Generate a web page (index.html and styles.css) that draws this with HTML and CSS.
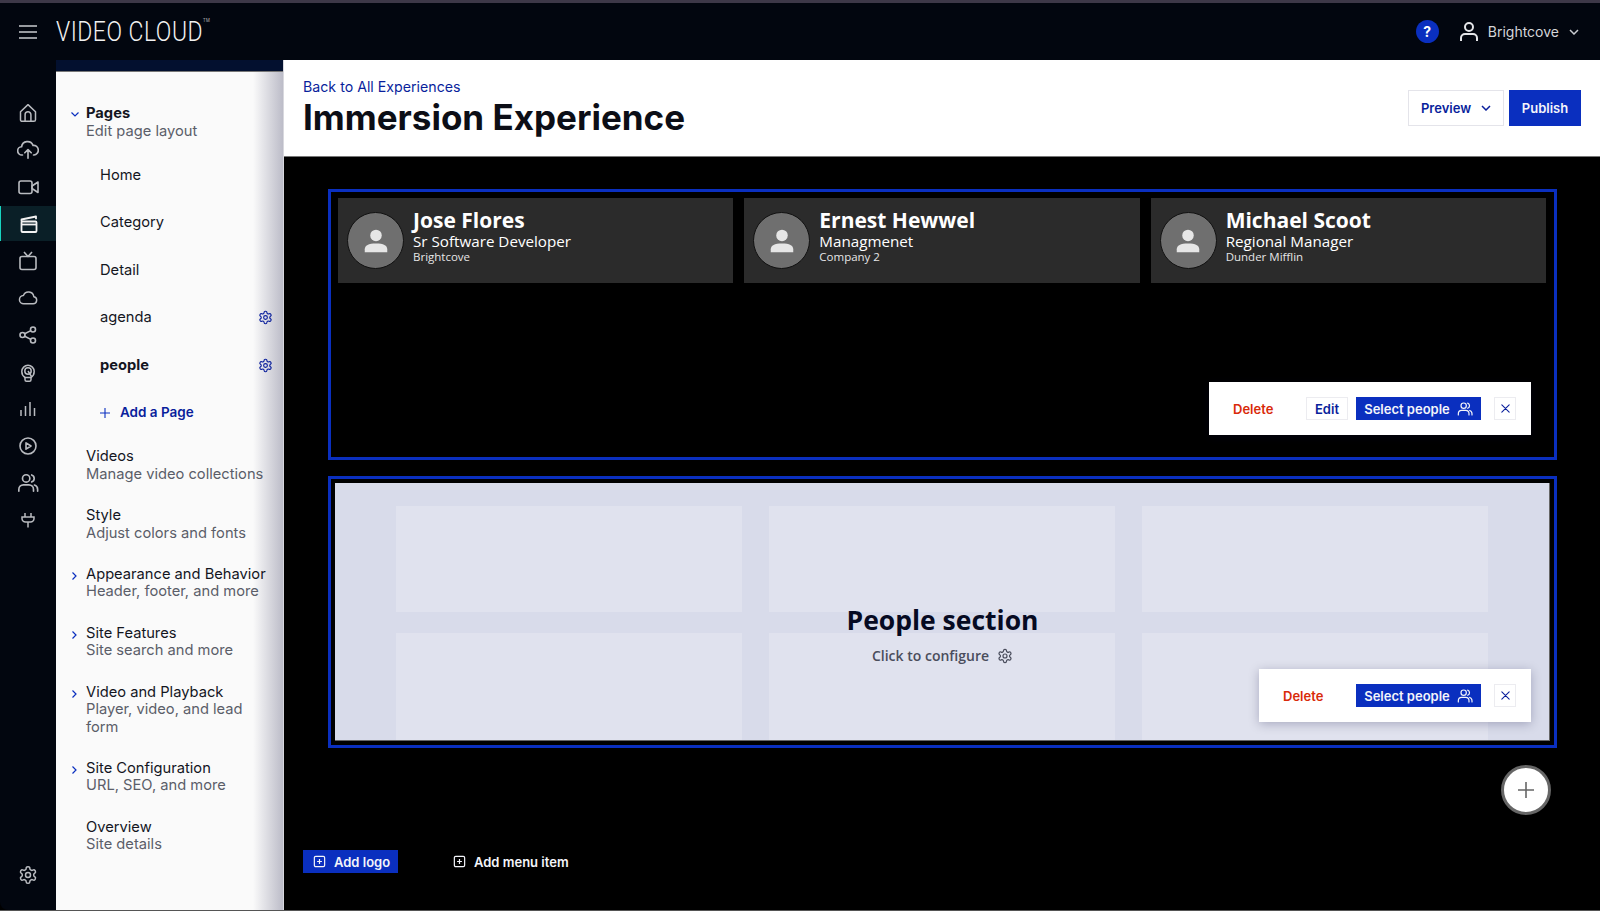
FILE: index.html
```html
<!DOCTYPE html>
<html lang="en">
<head>
  <meta charset="UTF-8">
  <meta name="viewport" content="width=device-width, initial-scale=1.0">
  <title>Immersion Experience</title>
  <link rel="stylesheet" href="styles.css">
</head>
<body>
  <svg class="sprites" xmlns="http://www.w3.org/2000/svg">
    <symbol id="gear" viewBox="0 0 24 24" fill="none" stroke="currentColor" stroke-width="1.8" stroke-linejoin="round">
      <path d="M12.22 2h-.44a2 2 0 0 0-2 2v.18a2 2 0 0 1-1 1.73l-.43.25a2 2 0 0 1-2 0l-.15-.08a2 2 0 0 0-2.73.73l-.22.38a2 2 0 0 0 .73 2.73l.15.1a2 2 0 0 1 1 1.72v.51a2 2 0 0 1-1 1.74l-.15.09a2 2 0 0 0-.73 2.73l.22.38a2 2 0 0 0 2.73.73l.15-.08a2 2 0 0 1 2 0l.43.25a2 2 0 0 1 1 1.73V20a2 2 0 0 0 2 2h.44a2 2 0 0 0 2-2v-.18a2 2 0 0 1 1-1.73l.43-.25a2 2 0 0 1 2 0l.15.08a2 2 0 0 0 2.73-.73l.22-.39a2 2 0 0 0-.73-2.73l-.15-.08a2 2 0 0 1-1-1.74v-.5a2 2 0 0 1 1-1.74l.15-.09a2 2 0 0 0 .73-2.73l-.22-.38a2 2 0 0 0-2.73-.73l-.15.08a2 2 0 0 1-2 0l-.43-.25a2 2 0 0 1-1-1.73V4a2 2 0 0 0-2-2z"/>
      <circle cx="12" cy="12" r="3"/>
    </symbol>
    <symbol id="users" viewBox="0 0 24 24" fill="none" stroke="currentColor" stroke-width="1.8" stroke-linecap="round">
      <circle cx="10" cy="7" r="4"/>
      <path d="M2 21v-2a5 5 0 0 1 5-5h6a5 5 0 0 1 5 5v2"/>
      <path d="M16 3.2a4 4 0 0 1 0 7.6"/>
      <path d="M19 14.2a5 5 0 0 1 3.5 4.8v2"/>
    </symbol>
    <symbol id="close" viewBox="0 0 24 24" fill="none" stroke="currentColor" stroke-width="2.4" stroke-linecap="round">
      <path d="M4 4l16 16M20 4L4 20"/>
    </symbol>
    <symbol id="person" viewBox="0 0 24 24" fill="currentColor">
      <circle cx="12" cy="7.5" r="4.6"/>
      <path d="M3 21v-2.5c0-3 3-4.6 9-4.6s9 1.600 9 4.600V21z"/>
    </symbol>
    <symbol id="add-box" viewBox="0 0 24 24" fill="none" stroke="currentColor" stroke-width="2.2">
      <rect x="2.500" y="2.500" width="19" height="19" rx="2.500"/>
      <path d="M12 7.500v9M7.500 12h9"/>
    </symbol>
  </svg>

  <div class="top-strip"></div>
  <header class="topbar">
    <svg class="menu-icon" width="18" height="14" viewBox="0 0 18 14" fill="none" stroke="#c9cbd0" stroke-width="1.600"><path d="M0 1h18M0 7h18M0 13h18"/></svg>
    <div class="logo">VIDEO CLOUD<sup>TM</sup></div>
    <div class="top-right">
      <span class="help">?</span>
      <svg class="user-icon" width="20" height="22" viewBox="0 0 20 22" fill="none" stroke="#e4e5e8" stroke-width="2"><circle cx="10" cy="6" r="4"/><path d="M2 20v-3a4 4 0 0 1 4-4h8a4 4 0 0 1 4 4v3"/></svg>
      <span class="account">Brightcove</span>
      <svg width="10" height="6" viewBox="0 0 10 6" fill="none" stroke="#c9cbd0" stroke-width="1.500"><path d="M1 1l4 4 4-4"/></svg>
    </div>
  </header>

  <div class="layout">
    <nav class="rail">
      <a class="rail-item"><svg width="20" height="20" viewBox="0 0 24 24" fill="none" stroke="currentColor" stroke-width="1.800" stroke-linejoin="round"><path d="M3 10.500L12 2l9 8.500V20a2 2 0 0 1-2 2H5a2 2 0 0 1-2-2z"/><path d="M8.500 22v-8a3.500 3.500 0 0 1 7 0v8"/></svg></a>
      <a class="rail-item"><svg width="22" height="22" viewBox="0 0 24 24" fill="none" stroke="currentColor" stroke-width="1.800" stroke-linecap="round" stroke-linejoin="round"><path d="M6 17.500H5.500a4.500 4.500 0 0 1-.5-9A6.500 6.500 0 0 1 17.500 7a5.200 5.200 0 0 1 1 10.400H18"/><path d="M12 21v-9M8.500 15l3.500-3.500 3.500 3.500"/></svg></a>
      <a class="rail-item"><svg width="21" height="16" viewBox="0 0 21 16" fill="none" stroke="currentColor" stroke-width="1.600" stroke-linejoin="round"><rect x="1" y="2" width="13" height="12.500" rx="2"/><path d="M14 7l6-4v10.500l-6-4z"/></svg></a>
      <a class="rail-item active"><svg width="18" height="18" viewBox="0 0 18 18" fill="none" stroke="currentColor" stroke-width="1.800"><rect x="1.500" y="6.500" width="15" height="10.500" rx="1"/><path d="M1.500 9.500h15"/><path d="M1.500 6.500V4.500L16 1.500v2.800" stroke-linejoin="round"/></svg></a>
      <a class="rail-item"><svg width="18" height="20" viewBox="0 0 18 20" fill="none" stroke="currentColor" stroke-width="1.600" stroke-linejoin="round"><rect x="1" y="5.500" width="16" height="13" rx="2"/><path d="M5 1l4 4.500L13 1"/></svg></a>
      <a class="rail-item"><svg width="20" height="20" viewBox="0 0 24 24" fill="none" stroke="currentColor" stroke-width="1.800" stroke-linejoin="round"><path d="M18 19H7a5 5 0 0 1-.5-10A6.500 6.500 0 0 1 19 10.500 4.300 4.300 0 0 1 18 19z"/></svg></a>
      <a class="rail-item"><svg width="18" height="18" viewBox="0 0 18 18" fill="none" stroke="currentColor" stroke-width="1.600"><circle cx="3.500" cy="9" r="2.500"/><circle cx="14" cy="3.500" r="2.500"/><circle cx="14" cy="14.500" r="2.500"/><path d="M5.700 7.800l6.100-3.200M5.700 10.200l6.100 3.200"/></svg></a>
      <a class="rail-item"><svg width="14" height="20" viewBox="0 0 14 20" fill="none" stroke="currentColor" stroke-width="1.500"><path d="M4 15.500C2 14.200.8 12 .8 9.500a6.200 6.200 0 0 1 12.400 0c0 2.500-1.200 4.700-3.200 6"/><circle cx="7" cy="9" r="3.200"/><path d="M7 9l3.500 5.500M4 15.500h6v2.200a1.500 1.500 0 0 1-1.500 1.500h-3A1.500 1.500 0 0 1 4 17.700z"/></svg></a>
      <a class="rail-item"><svg width="16" height="16" viewBox="0 0 16 16" fill="none" stroke="currentColor" stroke-width="1.500"><path d="M1 9v6M5.500 5v10M10 1v14M14.500 7v8"/></svg></a>
      <a class="rail-item"><svg width="18" height="18" viewBox="0 0 18 18" fill="none" stroke="currentColor" stroke-width="1.600" stroke-linejoin="round"><circle cx="9" cy="9" r="8"/><path d="M7 5.800L12 9l-5 3.200z"/></svg></a>
      <a class="rail-item"><svg width="22" height="22"><use href="#users"/></svg></a>
      <a class="rail-item"><svg width="14" height="16" viewBox="0 0 14 16" fill="none" stroke="currentColor" stroke-width="1.500"><path d="M1 5h12v1.500A3.500 3.500 0 0 1 9.500 10h-5A3.500 3.500 0 0 1 1 6.500zM4 1v4M10 1v4M7 10v5.500"/></svg></a>
      <a class="rail-item rail-bottom"><svg width="20" height="20"><use href="#gear"/></svg></a>
    </nav>

    <aside class="side-panel">
      <div class="side-strip"></div>
      <div class="side-nav">
        <div class="nav-group pages">
          <svg class="caret" width="8" height="5" viewBox="0 0 8 5" fill="none" stroke="#0a2fbf" stroke-width="1.200"><path d="M.5.500L4 4 7.500.500"/></svg>
          <div class="nav-title bold">Pages</div>
          <div class="nav-sub">Edit page layout</div>
        </div>
        <ul class="page-list">
          <li>Home</li>
          <li>Category</li>
          <li>Detail</li>
          <li>agenda <svg class="page-gear" width="15" height="15"><use href="#gear"/></svg></li>
          <li class="current">people <svg class="page-gear" width="15" height="15"><use href="#gear"/></svg></li>
          <li class="add-page"><svg width="10" height="10" viewBox="0 0 10 10" fill="none" stroke="#0a2fbf" stroke-width="1.100"><path d="M5 0v10M0 5h10"/></svg> Add a Page</li>
        </ul>
        <div class="nav-group">
          <div class="nav-title">Videos</div>
          <div class="nav-sub">Manage video collections</div>
        </div>
        <div class="nav-group">
          <div class="nav-title">Style</div>
          <div class="nav-sub">Adjust colors and fonts</div>
        </div>
        <div class="nav-group">
          <svg class="caret right" width="5" height="8" viewBox="0 0 5 8" fill="none" stroke="#0a2fbf" stroke-width="1.200"><path d="M.5.500L4 4 .5 7.500"/></svg>
          <div class="nav-title">Appearance and Behavior</div>
          <div class="nav-sub">Header, footer, and more</div>
        </div>
        <div class="nav-group">
          <svg class="caret right" width="5" height="8" viewBox="0 0 5 8" fill="none" stroke="#0a2fbf" stroke-width="1.200"><path d="M.5.500L4 4 .5 7.500"/></svg>
          <div class="nav-title">Site Features</div>
          <div class="nav-sub">Site search and more</div>
        </div>
        <div class="nav-group">
          <svg class="caret right" width="5" height="8" viewBox="0 0 5 8" fill="none" stroke="#0a2fbf" stroke-width="1.200"><path d="M.5.500L4 4 .5 7.500"/></svg>
          <div class="nav-title">Video and Playback</div>
          <div class="nav-sub">Player, video, and lead<br>form</div>
        </div>
        <div class="nav-group">
          <svg class="caret right" width="5" height="8" viewBox="0 0 5 8" fill="none" stroke="#0a2fbf" stroke-width="1.200"><path d="M.5.500L4 4 .5 7.500"/></svg>
          <div class="nav-title">Site Configuration</div>
          <div class="nav-sub">URL, SEO, and more</div>
        </div>
        <div class="nav-group">
          <div class="nav-title">Overview</div>
          <div class="nav-sub">Site details</div>
        </div>
      </div>
    </aside>

    <main class="main">
      <div class="page-header">
        <div>
          <a class="back-link">Back to All Experiences</a>
          <h1>Immersion Experience</h1>
        </div>
        <div class="header-actions">
          <button class="btn-outline">Preview <svg width="10" height="6" viewBox="0 0 10 6" fill="none" stroke="#0a1f9c" stroke-width="1.500"><path d="M1 1l4 4 4-4"/></svg></button>
          <button class="btn-primary">Publish</button>
        </div>
      </div>

      <div class="canvas">
        <section class="frame frame-people">
          <div class="cards">
            <div class="card">
              <div class="avatar"><svg width="30" height="30"><use href="#person"/></svg></div>
              <div class="card-text">
                <div class="card-name">Jose Flores</div>
                <div class="card-role">Sr Software Developer</div>
                <div class="card-company">Brightcove</div>
              </div>
            </div>
            <div class="card">
              <div class="avatar"><svg width="30" height="30"><use href="#person"/></svg></div>
              <div class="card-text">
                <div class="card-name">Ernest Hewwel</div>
                <div class="card-role">Managmenet</div>
                <div class="card-company">Company 2</div>
              </div>
            </div>
            <div class="card">
              <div class="avatar"><svg width="30" height="30"><use href="#person"/></svg></div>
              <div class="card-text">
                <div class="card-name">Michael Scoot</div>
                <div class="card-role">Regional Manager</div>
                <div class="card-company">Dunder Mifflin</div>
              </div>
            </div>
          </div>
          <div class="toolbar">
            <span class="delete">Delete</span>
            <button class="tool-btn">Edit</button>
            <button class="select-btn">Select people <svg width="16" height="16"><use href="#users"/></svg></button>
            <button class="close-btn"><svg width="11" height="11"><use href="#close"/></svg></button>
          </div>
        </section>

        <section class="frame frame-empty">
          <div class="placeholder">
            <div class="tile"></div>
            <div class="tile"></div>
            <div class="tile"></div>
            <div class="tile"></div>
            <div class="tile"></div>
            <div class="tile"></div>
          </div>
          <div class="placeholder-label">
            <h2>People section</h2>
            <p>Click to configure <svg width="16" height="16"><use href="#gear"/></svg></p>
          </div>
          <div class="toolbar toolbar-small">
            <span class="delete">Delete</span>
            <button class="select-btn">Select people <svg width="16" height="16"><use href="#users"/></svg></button>
            <button class="close-btn"><svg width="11" height="11"><use href="#close"/></svg></button>
          </div>
        </section>

        <div class="add-row">
          <button class="add-section"><svg width="20" height="20" viewBox="0 0 20 20" fill="none" stroke="#666" stroke-width="1.600"><path d="M10 2v16M2 10h16"/></svg></button>
        </div>

        <div class="canvas-footer">
          <button class="add-logo"><svg width="13" height="13"><use href="#add-box"/></svg> Add logo</button>
          <button class="add-menu"><svg width="13" height="13"><use href="#add-box"/></svg> Add menu item</button>
        </div>
      </div>
    </main>
  </div>
</body>
</html>
```

FILE: styles.css
```css
* {
  box-sizing: border-box;
}

body {
  margin: 0;
  width: 1600px;
  height: 911px;
  overflow: hidden;
  background-color: #000;
  font-family: "Inter", "Liberation Sans", sans-serif;
  color: #14161f;
}

.sprites {
  display: none;
}

button {
  font-family: inherit;
  cursor: pointer;
}

.top-strip {
  height: 3px;
  background-color: #3d3848;
}

/* Top bar */
.topbar {
  height: 57px;
  display: flex;
  align-items: center;
  background-color: #02060f;
  color: #e4e5e8;
}

.menu-icon {
  margin-left: 19px;
}

.logo {
  margin-left: 19px;
  font-family: "Roboto", sans-serif;
  font-weight: 300;
  font-size: 27px;
  letter-spacing: 0.6px;
  color: #f2f2f2;
  white-space: nowrap;
  transform: scaleX(0.85);
  transform-origin: left center;
}

.logo sup {
  font-size: 5px;
  vertical-align: 19px;
  line-height: 0;
}

.top-right {
  margin-left: auto;
  margin-right: 21px;
  display: flex;
  align-items: center;
}

.help {
  width: 23px;
  height: 23px;
  border-radius: 50%;
  background-color: #0a2fbf;
  color: #fff;
  font-weight: 700;
  font-size: 14px;
  display: flex;
  align-items: center;
  justify-content: center;
}

.user-icon {
  margin-left: 20px;
}

.account {
  margin-left: 9px;
  margin-right: 10px;
  font-size: 14px;
  color: #d4d5d9;
}

/* Layout */
.layout {
  display: flex;
  height: 851px;
  border-bottom: 1px solid #555;
}

.rail {
  width: 56px;
  flex-shrink: 0;
  padding-top: 34px;
  display: flex;
  flex-direction: column;
  background-color: #02060f;
  border-bottom-left-radius: 8px;
}

.rail-item {
  height: 37px;
  display: flex;
  align-items: center;
  justify-content: center;
  color: #b9bbc0;
}

.rail-item.active {
  background-color: #0a1f27;
  border-left: 1px solid #17d4c0;
  color: #f2f2f2;
  height: 35px;
  margin: 1px 0;
}

.rail-bottom {
  margin-top: auto;
  margin-bottom: 17px;
}

/* Side panel */
.side-panel {
  width: 228px;
  flex-shrink: 0;
  background: linear-gradient(to right, #fafafa 197px, #bcbcc8 227px);
  border-right: 1px solid #d8d8de;
}

.side-strip {
  height: 12px;
  background-color: #03102f;
  border-bottom: 1px solid #777;
}

.side-nav {
  padding: 33px 0 0 30px;
  font-size: 14.7px;
  line-height: 17.5px;
}

.nav-group {
  position: relative;
  margin-bottom: 23.8px;
}

.nav-group.pages {
  margin-bottom: 0;
}

.nav-title {
  color: #14161f;
}

.nav-title.bold {
  font-weight: 700;
}

.nav-sub {
  color: #5b5e69;
}

.caret {
  position: absolute;
  left: -15px;
  top: 7px;
}

.caret.right {
  left: -14px;
  top: 6px;
}

.page-list {
  list-style: none;
  width: 197px;
  margin: 0 0 24px;
  padding: 0 0 0 14px;
}

.page-list li {
  height: 47.4px;
  display: flex;
  align-items: center;
  position: relative;
  top: 12px;
}

.page-list li.current {
  font-weight: 700;
}

.page-gear {
  color: #0a1f9c;
  position: absolute;
  right: 10px;
}

.add-page {
  color: #0a1f9c;
  font-weight: 600;
  font-size: 13.5px;
  gap: 10px;
}

/* Main */
.main {
  flex: 1;
  min-width: 0;
  display: flex;
  flex-direction: column;
}

.page-header {
  height: 97px;
  flex-shrink: 0;
  padding: 18px 19px 0 19px;
  display: flex;
  justify-content: space-between;
  background-color: #fff;
  border-bottom: 1px solid #777;
}

.back-link {
  display: block;
  font-size: 14.2px;
  line-height: 17px;
  color: #0a1f9c;
}

h1 {
  margin: 1px 0 0;
  font-size: 35px;
  line-height: 42px;
  font-weight: 700;
  color: #0c0e16;
}

.header-actions {
  display: flex;
  gap: 5px;
  margin-top: 12px;
  height: 36px;
}

.btn-outline {
  width: 96px;
  display: flex;
  align-items: center;
  justify-content: center;
  gap: 10px;
  border: 1px solid #e4e4ea;
  background-color: #fff;
  color: #0a1f9c;
  font-size: 13px;
  font-weight: 600;
}

.btn-primary {
  width: 72px;
  border: 1px solid #0a2fbf;
  background-color: #0a2fbf;
  color: #f4f5fa;
  font-size: 13px;
  font-weight: 600;
}

/* Canvas */
.canvas {
  flex: 1;
  padding: 32px 43px 0 44px;
  background-color: #000;
}

.frame {
  position: relative;
  border: 3px solid #0a2fbf;
}

.frame-people {
  height: 271px;
  padding: 6px 8px 6px 7px;
}

.frame-empty {
  height: 272px;
  margin-top: 16px;
  padding: 4px;
}

.cards {
  display: grid;
  grid-template-columns: repeat(3, 1fr);
  gap: 11px;
}

.card {
  height: 85px;
  padding-left: 9px;
  display: flex;
  align-items: center;
  gap: 9px;
  background-color: #2b2b2b;
  color: #fff;
  font-family: "Open Sans", sans-serif;
}

.avatar {
  width: 57px;
  height: 57px;
  flex-shrink: 0;
  border-radius: 50%;
  border: 1px solid #111;
  background-color: #6f6f6f;
  color: #e6e6e6;
  display: flex;
  align-items: center;
  justify-content: center;
}

.card-text {
  margin-bottom: 10px;
}

.card-name {
  font-size: 21px;
  font-weight: 700;
  line-height: 23px;
}

.card-role {
  font-size: 15.2px;
  line-height: 18px;
}

.card-company {
  font-size: 11.5px;
  line-height: 13px;
  color: #e6e6e6;
}

/* Floating toolbars */
.toolbar {
  position: absolute;
  right: 23px;
  bottom: 22px;
  width: 322px;
  height: 53px;
  padding: 0 15px 0 24px;
  display: flex;
  align-items: center;
  background-color: #fff;
  font-size: 13px;
  font-weight: 600;
  box-shadow: 0 2px 10px rgba(0, 0, 50, 0.25);
}

.toolbar-small {
  width: 272px;
  bottom: 23px;
}

.delete {
  color: #d92a0a;
  margin-right: auto;
}

.tool-btn {
  width: 42px;
  height: 23px;
  margin-right: 8px;
  padding: 0;
  border: 1px solid #ececf0;
  background-color: #fff;
  color: #0a1f9c;
  font-size: 13px;
  font-weight: 600;
}

.select-btn {
  width: 125px;
  height: 23px;
  padding: 0;
  display: flex;
  align-items: center;
  justify-content: center;
  gap: 7px;
  border: none;
  background-color: #0a2fbf;
  color: #f4f5fa;
  font-size: 13px;
  font-weight: 600;
}

.close-btn {
  width: 22px;
  height: 23px;
  margin-left: 13px;
  padding: 0;
  display: flex;
  align-items: center;
  justify-content: center;
  border: 1px solid #ececf0;
  background-color: #fff;
  color: #0a1f9c;
}

/* Placeholder */
.placeholder {
  height: 100%;
  padding: 23px 61px 0;
  display: grid;
  grid-template-columns: repeat(3, 1fr);
  grid-template-rows: 106px 1fr;
  column-gap: 27px;
  row-gap: 21px;
  background-color: #d8dbea;
  border: 1px solid #666;
  border-top: none;
  border-left: none;
}

.tile {
  background-color: #e0e2ee;
}

.placeholder-label {
  position: absolute;
  left: 0;
  right: 0;
  top: 123px;
  text-align: center;
  font-family: "Open Sans", sans-serif;
}

.placeholder-label h2 {
  margin: 0;
  font-size: 26.5px;
  line-height: 36px;
  font-weight: 700;
  color: #060a22;
}

.placeholder-label p {
  margin: 8px 0 0;
  display: flex;
  align-items: center;
  justify-content: center;
  gap: 8px;
  font-size: 14px;
  font-weight: 600;
  color: #4a4d5c;
}

/* Bottom controls */
.add-row {
  display: flex;
  justify-content: flex-end;
  margin-top: 17px;
  padding-right: 6px;
}

.add-section {
  width: 50px;
  height: 50px;
  padding: 0;
  display: flex;
  align-items: center;
  justify-content: center;
  border-radius: 50%;
  border: 3px solid #666;
  background-color: #fff;
}

.canvas-footer {
  display: flex;
  align-items: center;
  gap: 55px;
  margin-top: 35px;
  margin-left: -25px;
}

.add-logo,
.add-menu {
  height: 23px;
  display: flex;
  align-items: center;
  gap: 8px;
  border: none;
  color: #f4f5fa;
  font-size: 13px;
  font-weight: 600;
}

.add-logo {
  width: 95px;
  padding: 0 0 0 10px;
  background-color: #0a2fbf;
}

.add-menu {
  padding: 0;
  background: none;
}
```
